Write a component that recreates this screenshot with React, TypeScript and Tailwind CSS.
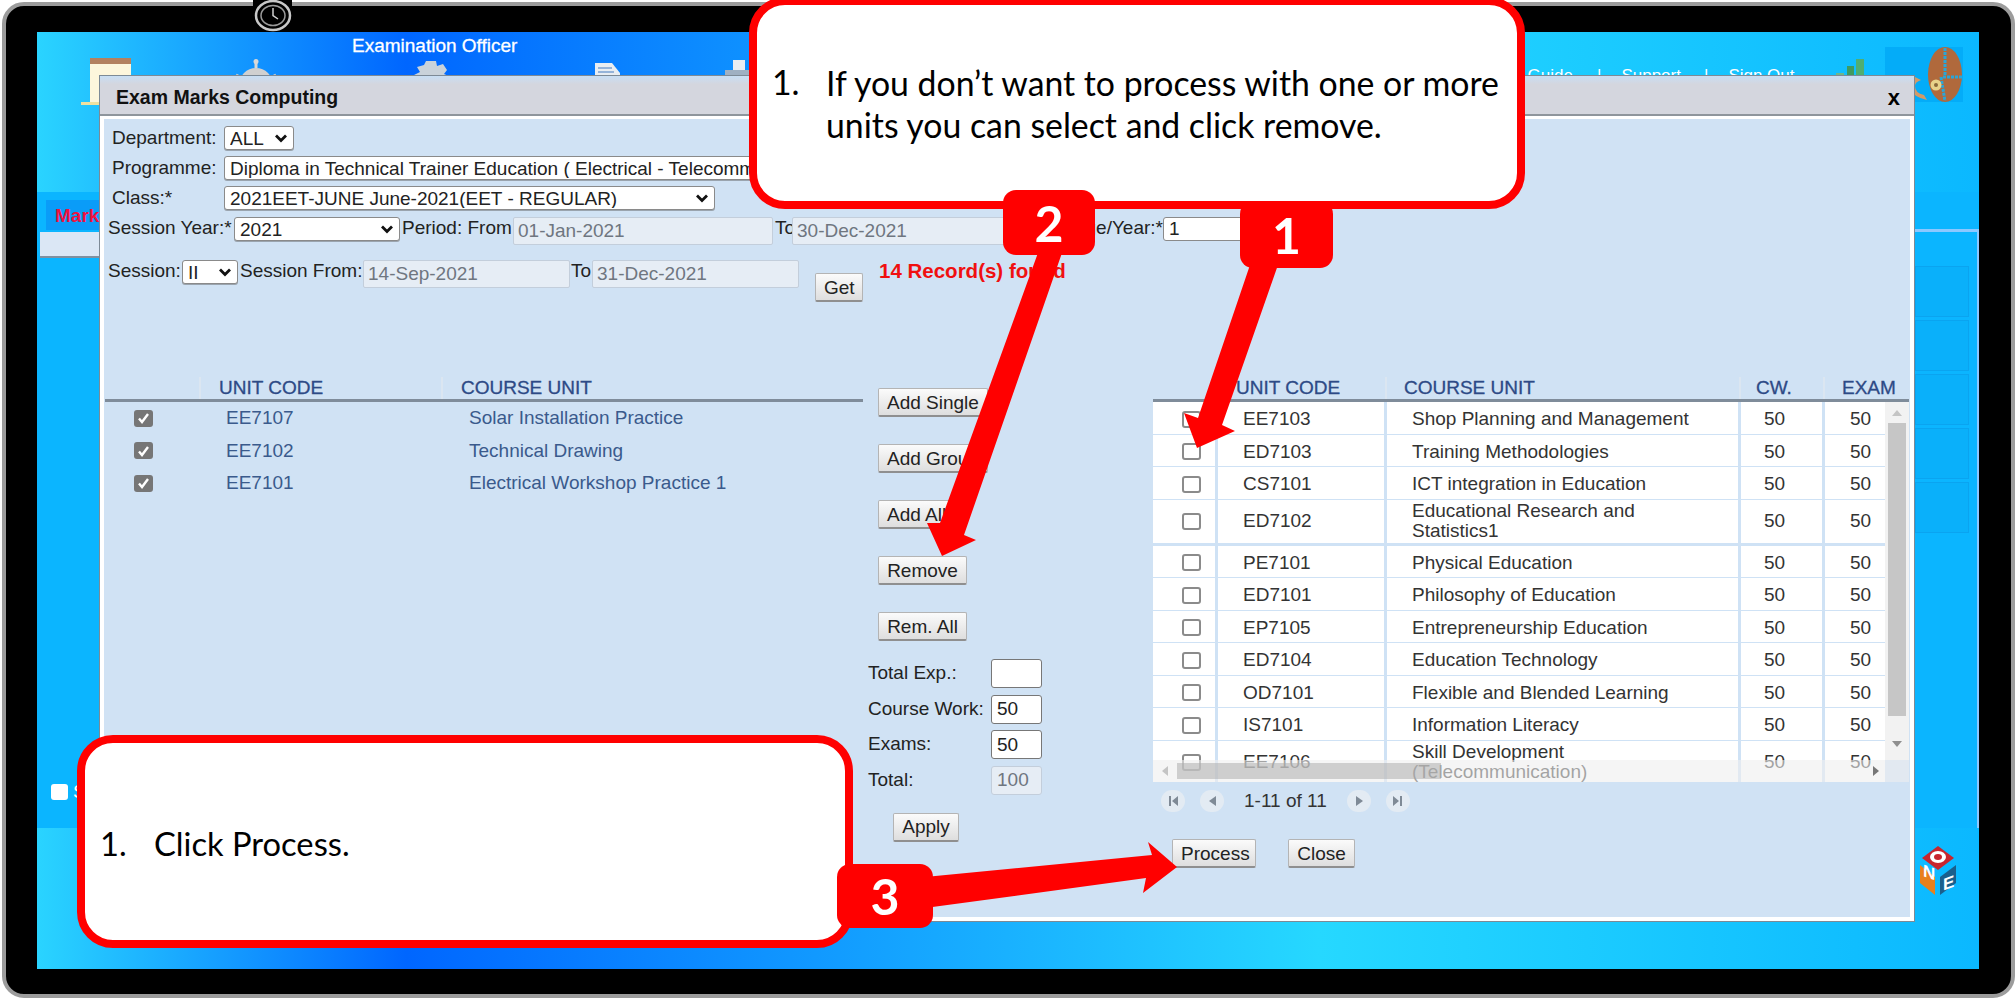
import React from "react";

const btn =
  "h-[29px] px-[8px] text-[19px] leading-none text-[#222] whitespace-nowrap rounded-[2px] border border-[#b4b4b4] border-b-[2px] border-b-[#8f8f8f] bg-gradient-to-b from-[#fbfbfb] to-[#dedede]";
const dis =
  "h-[28px] rounded-[2px] border border-[#c3cedb] bg-[#e6edf5] pl-[4px] text-[19px] text-[#6f7680] outline-none";

const rows: [string, string, number][] = [
  ["EE7103", "Shop Planning and Management", 0],
  ["ED7103", "Training Methodologies", 0],
  ["CS7101", "ICT integration in Education", 0],
  ["ED7102", "Educational Research and Statistics1", 1],
  ["PE7101", "Physical Education", 0],
  ["ED7101", "Philosophy of Education", 0],
  ["EP7105", "Entrepreneurship Education", 0],
  ["ED7104", "Education Technology", 0],
  ["OD7101", "Flexible and Blended Learning", 0],
  ["IS7101", "Information Literacy", 0],
  ["EE7106", "Skill Development (Telecommunication)", 1],
];

const selected = [
  ["EE7107", "Solar Installation Practice"],
  ["EE7102", "Technical Drawing"],
  ["EE7101", "Electrical Workshop Practice 1"],
];

function Sel({ w, text }: { w: string; text: string }) {
  return (
    <div className={`relative h-[24px] shrink-0 ${w}`}>
      <select className="block h-full w-full appearance-none rounded-[3px] border border-[#8a8a8a] bg-white pl-[5px] pr-[24px] text-[19px] leading-none text-[#222] shadow-[0_1px_0_#9aa4ae]">
        <option>{text}</option>
      </select>
      <svg className="pointer-events-none absolute right-[6px] top-[8px]" width="14" height="9" viewBox="0 0 14 9">
        <path d="M2 1.5 L7 6.5 L12 1.5" fill="none" stroke="#111" strokeWidth="2.8" />
      </svg>
    </div>
  );
}

function Box() {
  return <span className="block h-[17px] w-[19px] rounded-[3px] border-2 border-[#8b8b8b] bg-white" />;
}

function Checked() {
  return (
    <span className="flex h-[17px] w-[19px] items-center justify-center rounded-[3px] bg-[#767676]">
      <svg width="13" height="12" viewBox="0 0 13 12">
        <path d="M2 6.5 L5 10 L11 2" fill="none" stroke="#fff" strokeWidth="2.4" />
      </svg>
    </span>
  );
}

function Pg({ d }: { d: string }) {
  return (
    <span className="flex h-[22px] w-[24px] items-center justify-center rounded-full bg-[#e3ebf3]">
      <svg width="14" height="14" viewBox="0 0 14 14">
        <path d={d} fill="#7f8a96" />
      </svg>
    </span>
  );
}

function Badge({ n, cls }: { n: string; cls: string }) {
  return (
    <div
      className={`absolute flex items-center justify-center rounded-[13px] bg-[#ff0000] text-[50px] font-bold leading-none text-white ${cls}`}
      style={{ fontFamily: "Lato, sans-serif" }}
    >
      {n}
    </div>
  );
}

export default function App() {
  return (
    <div
      className="relative h-[998px] w-[2016px] overflow-hidden bg-white text-[19px]"
      style={{ fontFamily: '"Liberation Sans", Arial, sans-serif' }}
    >
      {/* device frame */}
      <div className="ml-[2px] mt-[2px] h-[996px] w-[2013px] rounded-[22px] border-[4px] border-[#9c9c9c] bg-black pb-[25px] pl-[31px] pr-[32px] pt-[26px]">
        <div className="relative flex h-full w-full flex-col bg-[linear-gradient(90deg,#2ad4ff_0%,#0066ff_19%,#26d8ff_66%,#0bb8ff_100%)]">
          {/* header */}
          <div className="h-[160px] shrink-0">
            <div className="pl-[315px] pt-[3px] text-[19px] leading-[22px] text-white [-webkit-text-stroke:0.3px_white]">
              Examination Officer
            </div>
            <div className="-mt-[10px] flex items-start">
              <svg className="ml-[44px] mt-[11px]" width="52" height="48" viewBox="0 0 52 48">
                <rect x="9" y="0" width="41" height="6" fill="#b3815f" />
                <rect x="9" y="6" width="41" height="38" fill="#fdf6dc" />
                <rect x="0" y="44" width="50" height="3" fill="#f0e0a0" />
              </svg>
              <svg className="ml-[103px] mt-[12px]" width="40" height="30" viewBox="0 0 40 30">
                <circle cx="20" cy="2.5" r="2.5" fill="#d8d8d8" />
                <rect x="18.5" y="3" width="3" height="6" fill="#d8d8d8" />
                <path d="M3 26 A17 17 0 0 1 37 26 Z" fill="#d0d0d0" />
                <path d="M0 16 L6 19 M40 16 L34 19" stroke="#d0d0d0" strokeWidth="3" />
              </svg>
              <svg className="ml-[136px] mt-[13px]" width="40" height="24" viewBox="0 0 40 24">
                <path d="M14 1 h10 l1 5 l6 -2 l4 6 l-3 4 l7 3 v7 H2 v-9 l6 -3 l-3 -5 l7 -2 Z" fill="#c9d2da" />
              </svg>
              <svg className="ml-[143px] mt-[16px]" width="25" height="18" viewBox="0 0 25 18">
                <path d="M0 0 h17 l8 10 v8 H0 Z" fill="#e8edf2" />
                <path d="M3 5 h14 M3 9 h16" stroke="#7aa0d0" strokeWidth="1.5" />
              </svg>
              <svg className="ml-[105px] mt-[13px]" width="26" height="18" viewBox="0 0 26 18">
                <rect x="8" y="0" width="12" height="10" fill="#e8edf2" />
                <rect x="0" y="10" width="26" height="8" fill="#9fb0c2" />
              </svg>
              <span className="ml-[736px] mt-[18px] text-[17px] leading-[22px] text-white">User Guide</span>
              <span className="ml-[24px] mt-[18px] text-[17px] leading-[22px] text-white">|</span>
              <span className="ml-[20px] mt-[18px] text-[17px] leading-[22px] text-white">Support</span>
              <span className="ml-[23px] mt-[18px] text-[17px] leading-[22px] text-white">|</span>
              <span className="ml-[20px] mt-[18px] text-[17px] leading-[22px] text-white">Sign Out</span>
              <svg className="ml-auto mt-[12px]" width="28" height="18" viewBox="0 0 28 18">
                <rect x="0" y="14" width="8" height="4" fill="#6fb58a" />
                <rect x="11" y="7" width="7" height="11" fill="#3f9a60" />
                <rect x="20" y="0" width="8" height="18" fill="#4fae72" />
              </svg>
              <div className="ml-[21px] mr-[16px] h-[55px] w-[78px] bg-[#04acf8]">
                <svg width="78" height="55" viewBox="0 0 78 55">
                  <path d="M30 30 q-6 4 -4 12 q2 8 16 11 l-3 -5 q-9 -2 -9 -9 q0 -4 6 -6 Z" fill="#d39a68" />
                  <ellipse cx="60" cy="27.5" rx="17" ry="27.5" fill="#b0693c" />
                  <path d="M60 1 V28 M58 30 H77 M56 30 L60 54" stroke="#2aa6d8" strokeWidth="3" strokeDasharray="3 1" />
                  <circle cx="51" cy="38" r="5.5" fill="#e8d28a" />
                  <circle cx="51" cy="38" r="2" fill="#8a6a3c" />
                </svg>
              </div>
            </div>
          </div>

          {/* working area */}
          <div className="flex h-[636px] shrink-0 justify-between bg-[#0bb5ff]">
            <div className="w-[62px]">
              <div className="ml-[9px] mt-[8px] h-[30px] overflow-hidden bg-[#0a9cf8] pl-[9px] pt-[5px] text-[19px] font-bold leading-[22px] text-[#f01040]">
                Mark
              </div>
              <div className="ml-[3px] mt-[2px] h-[26px] border-b-2 border-[#8090a0] bg-[#dbe7f5]" />
              <div className="mt-[526px] flex items-center pl-[14px]">
                <span className="block h-[16px] w-[17px] rounded-[3px] bg-white" />
                <span className="ml-[5px] leading-[16px] text-white">S</span>
              </div>
            </div>
            <div className="w-[64px]">
              <div className="mt-[37px] flex h-[599px] flex-col gap-[3px] border-r-[2px] border-t-[3px] border-[#8cc8ff] pr-[8px] pt-[34px]">
                {[0, 1, 2, 3, 4].map((i) => (
                  <div key={i} className="h-[51px] border border-[#0aa4f0] bg-[#0ab0fa]" />
                ))}
              </div>
            </div>
          </div>

          {/* footer */}
          <div className="flex flex-1 items-start justify-end pr-[23px] pt-[18px]">
            <svg width="36" height="49" viewBox="0 0 36 49">
              <path d="M18 0 L34 12 L18 24 L2 12 Z" fill="#c8252e" />
              <ellipse cx="18" cy="11" rx="8" ry="6" fill="#fff" />
              <ellipse cx="18" cy="11" rx="4" ry="3" fill="#c8252e" />
              <path d="M0 19 L15 31 V49 L0 37 Z" fill="#e8801c" />
              <path d="M36 19 L20 31 V49 L36 37 Z" fill="#1b5f8c" />
              <text x="3" y="41" fontSize="17" fontWeight="700" fill="#fff" transform="skewY(20) translate(0 -12)">N</text>
              <text x="23" y="53" fontSize="17" fontWeight="700" fill="#fff" transform="skewY(-20)">E</text>
            </svg>
          </div>

          {/* modal */}
          <div className="absolute left-[62px] top-[43px] flex h-[847px] w-[1816px] flex-col border border-[#7d8a96] bg-white">
            <div className="flex h-[40px] shrink-0 items-center justify-between border-b-2 border-[#8e959c] bg-[linear-gradient(180deg,#c8def4_0%,#d4d6de_22%)] pl-[16px] pr-[14px] pt-[5px]">
              <span className="text-[19.5px] font-bold text-[#111]">Exam Marks Computing</span>
              <span className="text-[22px] font-bold text-black">x</span>
            </div>
            <div className="mx-[4px] mb-[4px] mt-[3px] flex-1 bg-[#d0e2f4] text-[#222]">
              {/* filter form */}
              <div className="h-[258px] pt-[7px]">
                <div className="flex h-[24px] items-center pl-[8px]">
                  <label className="w-[112px] leading-[24px]">Department:</label>
                  <Sel w="w-[70px]" text="ALL" />
                </div>
                <div className="mt-[6px] flex h-[24px] items-center pl-[8px]">
                  <label className="w-[112px] leading-[24px]">Programme:</label>
                  <Sel w="w-[880px]" text="Diploma in Technical Trainer Education ( Electrical - Telecommunication)" />
                </div>
                <div className="mt-[6px] flex h-[24px] items-center pl-[8px]">
                  <label className="w-[112px] leading-[24px]">Class:*</label>
                  <Sel w="w-[491px]" text="2021EET-JUNE June-2021(EET - REGULAR)" />
                </div>
                <div className="mt-[7px] flex h-[28px] items-start pl-[4px]">
                  <label className="w-[126px] whitespace-nowrap leading-[22px]">Session Year:*</label>
                  <Sel w="w-[166px]" text="2021" />
                  <label className="ml-[2px] w-[111px] whitespace-nowrap leading-[22px]">Period: From</label>
                  <input readOnly defaultValue="01-Jan-2021" className={`${dis} w-[260px]`} />
                  <label className="ml-[2px] w-[17px] leading-[22px]">To</label>
                  <input readOnly defaultValue="30-Dec-2021" className={`${dis} w-[250px]`} />
                  <label className="w-[121px] whitespace-nowrap text-right leading-[22px]">Stage/Year:*</label>
                  <input defaultValue="1" className="h-[24px] w-[100px] rounded-[3px] border border-[#8a8a8a] bg-white pl-[5px] text-[19px] leading-none text-[#222] outline-none" />
                </div>
                <div className="mt-[15px] flex items-start pl-[4px]">
                  <label className="w-[74px] leading-[22px]">Session:</label>
                  <Sel w="w-[56px]" text="II" />
                  <label className="ml-[2px] w-[123px] whitespace-nowrap leading-[22px]">Session From:</label>
                  <input readOnly defaultValue="14-Sep-2021" className={`${dis} w-[207px]`} />
                  <label className="ml-[1px] w-[21px] leading-[22px]">To</label>
                  <input readOnly defaultValue="31-Dec-2021" className={`${dis} w-[207px]`} />
                  <button className={`${btn} ml-[16px] mt-[13px] w-[48px]`}>Get</button>
                  <span className="ml-[16px] whitespace-nowrap text-[20.5px] font-bold leading-[22px] text-[#f01010]">
                    14 Record(s) found
                  </span>
                </div>
              </div>

              {/* lists */}
              <div className="flex pl-[1px]">
                <div className="w-[758px] shrink-0">
                  <div className="grid h-[25px] grid-cols-[96px_242px_420px] border-b-[3px] border-[#7f8c9a] font-normal leading-[22px] text-[#2d4a86] [-webkit-text-stroke:0.3px_#2d4a86]">
                    <span className="border-r-2 border-[#dbe6f1]" />
                    <span className="border-r-2 border-[#dbe6f1] pl-[18px]">UNIT CODE</span>
                    <span className="pl-[18px]">COURSE UNIT</span>
                  </div>
                  {selected.map(([c, n]) => (
                    <div key={c} className="grid h-[32.5px] grid-cols-[96px_242px_420px] items-center text-[#3a5a8c]">
                      <span className="pl-[29px]">
                        <Checked />
                      </span>
                      <span className="pl-[25px]">{c}</span>
                      <span className="pl-[26px]">{n}</span>
                    </div>
                  ))}
                </div>

                <div className="w-[290px] shrink-0">
                  <div className="mt-[11px] flex flex-col items-start gap-[27px] pl-[15px]">
                    <button className={btn}>Add Single</button>
                    <button className={btn}>Add Group</button>
                    <button className={btn}>Add All</button>
                    <button className={`${btn} w-[89px]`}>Remove</button>
                    <button className={`${btn} w-[89px]`}>Rem. All</button>
                  </div>
                  <div className="mt-[18px] grid grid-cols-[123px_51px] items-center gap-y-[6.5px] pl-[5px]">
                    <label>Total Exp.:</label>
                    <input className="h-[29px] rounded-[3px] border border-[#777] bg-white pl-[5px] text-[19px] outline-none" />
                    <label>Course Work:</label>
                    <input defaultValue="50" className="h-[29px] rounded-[3px] border border-[#777] bg-white pl-[5px] text-[19px] outline-none" />
                    <label>Exams:</label>
                    <input defaultValue="50" className="h-[29px] rounded-[3px] border border-[#777] bg-white pl-[5px] text-[19px] outline-none" />
                    <label>Total:</label>
                    <input readOnly defaultValue="100" className="h-[29px] rounded-[3px] border border-[#c3cedb] bg-[#e6edf5] pl-[5px] text-[19px] text-[#6f7680] outline-none" />
                  </div>
                  <button className={`${btn} ml-[30px] mt-[18px] w-[66px]`}>Apply</button>
                </div>

                <div className="w-[756px] shrink-0">
                  <div className="relative h-[405px] overflow-hidden">
                    <div className="grid h-[25px] grid-cols-[65px_169px_354px_84px_84px] border-b-[3px] border-[#7f8c9a] leading-[22px] text-[#2d4a86] [-webkit-text-stroke:0.3px_#2d4a86]">
                      <span className="border-r-2 border-[#dbe6f1]" />
                      <span className="border-r-2 border-[#dbe6f1] pl-[18px]">UNIT CODE</span>
                      <span className="border-r-2 border-[#dbe6f1] pl-[17px]">COURSE UNIT</span>
                      <span className="border-r-2 border-[#dbe6f1] pl-[15px]">CW.</span>
                      <span className="pl-[17px]">EXAM</span>
                    </div>
                    {rows.map(([c, n, tall]) => (
                      <div
                        key={c}
                        className={`grid grid-cols-[65px_169px_354px_84px_60px] text-[#333] ${tall ? "h-[46px]" : "h-[32.5px] [&>span]:pt-[3px]"}`}
                      >
                        <span className="flex items-center border-b-[3px] border-r-[3px] border-[#cfe2f5] bg-white pl-[29px]">
                          <Box />
                        </span>
                        <span className="flex items-center border-b-[3px] border-r-[3px] border-[#cfe2f5] bg-white pl-[25px]">{c}</span>
                        <span className="flex items-center border-b-[3px] border-r-[3px] border-[#cfe2f5] bg-white pl-[25px] pr-[40px] leading-[20px]">{n}</span>
                        <span className="flex items-center border-b-[3px] border-r-[3px] border-[#cfe2f5] bg-white pl-[23px]">50</span>
                        <span className="flex items-center border-b-[3px] border-[#cfe2f5] bg-white pl-[25px]">50</span>
                      </div>
                    ))}
                    {/* vertical scrollbar */}
                    <div className="absolute right-0 top-[25px] flex h-[358px] w-[24px] flex-col items-center bg-[#f2f2f2] px-[3px]">
                      <svg className="mt-[7px]" width="12" height="8" viewBox="0 0 12 8">
                        <path d="M6 1 L11 7 H1 Z" fill="#c4c4c4" />
                      </svg>
                      <div className="mt-[6px] h-[293px] w-full bg-[#c6c6c6]" />
                      <svg className="mt-[24px]" width="12" height="8" viewBox="0 0 12 8">
                        <path d="M6 7 L11 1 H1 Z" fill="#8f8f8f" />
                      </svg>
                    </div>
                    {/* horizontal scrollbar */}
                    <div className="absolute bottom-0 left-0 flex h-[22px] w-full items-center bg-[#eeeeee]/60">
                      <svg className="ml-[8px]" width="8" height="12" viewBox="0 0 8 12">
                        <path d="M1 6 L7 1 V11 Z" fill="#c4c4c4" />
                      </svg>
                      <div className="ml-[8px] h-[16px] w-[264px] bg-[#a8a8a8]/50" />
                      <svg className="ml-[431px]" width="8" height="12" viewBox="0 0 8 12">
                        <path d="M7 6 L1 1 V11 Z" fill="#777" />
                      </svg>
                    </div>
                  </div>
                  <div className="flex h-[38px] items-center pl-[8px]">
                    <Pg d="M3 2 h2 v10 h-2 Z M12 2 v10 l-6 -5 Z" />
                    <span className="ml-[15px]">
                      <Pg d="M11 2 v10 l-7 -5 Z" />
                    </span>
                    <span className="ml-[20px] text-[#333]">1-11 of 11</span>
                    <span className="ml-[20px]">
                      <Pg d="M4 2 v10 l7 -5 Z" />
                    </span>
                    <span className="ml-[15px]">
                      <Pg d="M2 2 v10 l6 -5 Z M9 2 h2 v10 h-2 Z" />
                    </span>
                  </div>
                  <div className="mt-[19px] flex gap-[32px] pl-[19px]">
                    <button className={`${btn} w-[84px]`}>Process</button>
                    <button className={`${btn} w-[67px]`}>Close</button>
                  </div>
                </div>
              </div>
            </div>
          </div>
        </div>
      </div>

      {/* clock on the frame */}
      <div className="absolute left-[253px] top-0 flex h-[32px] w-[39px] items-center justify-center bg-black">
        <svg width="38" height="32" viewBox="0 0 38 32">
          <ellipse cx="19" cy="15.5" rx="17" ry="14.5" fill="none" stroke="#c8c8c8" strokeWidth="2.5" />
          <ellipse cx="19" cy="15.5" rx="12" ry="10" fill="none" stroke="#9a9a9a" strokeWidth="1.5" />
          <path d="M19 8 V15.5 L24 19" fill="none" stroke="#d0d0d0" strokeWidth="1.5" />
        </svg>
      </div>

      {/* callouts */}
      <div
        className="absolute left-[749px] top-[-3px] flex h-[212px] w-[776px] items-center rounded-[36px] border-[8px] border-[#ff0000] bg-white pl-[15px] pt-[1px] text-[33.8px] leading-[42px] text-black"
        style={{ fontFamily: "Lato, sans-serif" }}
      >
        <span className="w-[54px] shrink-0 self-start pt-[55px]">1.</span>
        <span className="whitespace-nowrap">
          If you don’t want to process with one or more
          <br />
          units you can select and click remove.
        </span>
      </div>
      <div
        className="absolute left-[77px] top-[735px] flex h-[213px] w-[776px] items-center rounded-[36px] border-[8px] border-[#ff0000] bg-white pl-[15px] pt-[4px] text-[32.7px] text-black"
        style={{ fontFamily: "Lato, sans-serif" }}
      >
        <span className="w-[54px] shrink-0">1.</span>
        <span>Click Process.</span>
      </div>

      {/* arrows */}
      <svg className="absolute left-0 top-0" width="2016" height="998" viewBox="0 0 2016 998">
        <polygon fill="#ff0000" points="1251,262 1279,262 1222,425 1235,431 1197,448 1184,413 1198,418" />
        <polygon fill="#ff0000" points="1039,250 1063,250 964,535 976,540 942,556 927,523 940,523" />
        <polygon fill="#ff0000" points="925,877 1152,855 1148,842 1177,867 1143,893 1146,878 925,908" />
      </svg>

      <Badge n="1" cls="left-[1240px] top-[201px] h-[67px] w-[93px]" />
      <Badge n="2" cls="left-[1003px] top-[190px] h-[65px] w-[92px]" />
      <Badge n="3" cls="left-[837px] top-[864px] h-[64px] w-[96px]" />
    </div>
  );
}
